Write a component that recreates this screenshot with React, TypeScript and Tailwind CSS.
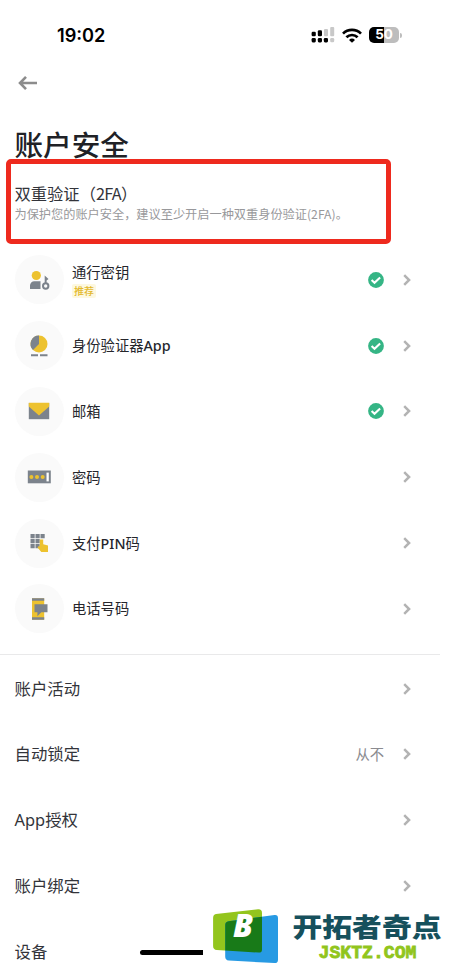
import { ReactNode } from "react";

interface MethodProps {
  label: string;
  icon: ReactNode;
  tag?: string;
  enabled?: boolean;
}

interface SettingProps {
  label: string;
  value?: string;
}

const PasskeyIcon = () => (
  <svg width="24" height="24" viewBox="0 0 24 24">
    <circle cx="9.3" cy="7.5" r="4.6" fill="#edc22f" />
    <path d="M3 21v-3.4a4.3 4.3 0 0 1 4.3-4.3h6.2V21z" fill="#7c838c" />
    <circle cx="18.7" cy="18" r="2.7" fill="none" stroke="#7c838c" strokeWidth="2" />
    <path d="M17.7 15.8V7.6l3.8 3.3-1.9 1.6v3.3z" fill="#7c838c" />
  </svg>
);

const AuthenticatorIcon = () => (
  <svg width="24" height="24" viewBox="0 0 24 24">
    <circle cx="12" cy="10" r="8.5" fill="#edc22f" />
    <path d="M12 10V1.5A8.5 8.5 0 0 0 6 16z" fill="#7c838c" />
    <path d="M4 21.2h7M13 21.2h7.5" stroke="#7c838c" strokeWidth="2" />
  </svg>
);

const MailIcon = () => (
  <svg width="24" height="24" viewBox="0 0 24 24">
    <path d="M1.8 4h20.4v16.2H1.8z" fill="#7c838c" />
    <path d="M1.8 3.8h20.4v3.6L12 16.4 1.8 7.4z" fill="#edc22f" />
  </svg>
);

const PasswordIcon = () => (
  <svg width="24" height="24" viewBox="0 0 24 24">
    <path d="M.8 5.5h23v12.8H.8z" fill="#7c838c" />
    <circle cx="4.4" cy="12" r="2" fill="#edc22f" />
    <circle cx="10" cy="12" r="2" fill="#edc22f" />
    <circle cx="15.7" cy="12" r="2" fill="#edc22f" />
    <path d="M19.5 7.6h2.3v8.8h-2.3z" fill="#fff" />
  </svg>
);

const PinIcon = () => (
  <svg width="24" height="24" viewBox="0 0 24 24">
    <path
      d="M3.5 3.1h4.2v4.1H3.5zM8.5 3.1h4.2v4.1H8.5zM13.5 3.1h4.2v4.1h-4.2zM3.5 8.1h4.2v4.1H3.5zM8.5 8.1h4.2v4.1H8.5zM3.5 13.1h4.2v4.1H3.5zM8.5 13.1h4.2v4.1H8.5z"
      fill="#7c838c"
    />
    <path d="M12.8 8.4h3.4v4.8l4.8 1.3v6.4h-6.7l-3.8-4.3 1.3-1.5 1 .5z" fill="#edc22f" />
  </svg>
);

const PhoneIcon = () => (
  <svg width="24" height="24" viewBox="0 0 24 24">
    <path d="M5 1.3h12.2v21.4H5z" fill="#edc22f" />
    <path d="M5 1.3h12.2v2.4H5zM5 20.3h12.2v2.4H5z" fill="#7c838c" />
    <path d="M7.5 7.2h13v8h-6.2l-3.9 4v-4H7.5z" fill="#7c838c" />
  </svg>
);

const CheckBadge = () => (
  <svg width="16" height="16" viewBox="0 0 16 16">
    <circle cx="8" cy="8" r="7.9" fill="#35b585" />
    <path d="M3.6 8l2.9 2.8 5.6-5.4" fill="none" stroke="#fff" strokeWidth="2.1" />
  </svg>
);

const Chevron = () => (
  <svg width="8" height="12" viewBox="0 0 8 12">
    <path d="M1.2 1.2L6.1 6l-4.9 4.8" fill="none" stroke="#b3b3b3" strokeWidth="2.5" />
  </svg>
);

const methods: MethodProps[] = [
  { label: "通行密钥", icon: <PasskeyIcon />, tag: "推荐", enabled: true },
  { label: "身份验证器App", icon: <AuthenticatorIcon />, enabled: true },
  { label: "邮箱", icon: <MailIcon />, enabled: true },
  { label: "密码", icon: <PasswordIcon /> },
  { label: "支付PIN码", icon: <PinIcon /> },
  { label: "电话号码", icon: <PhoneIcon /> },
];

const settings: SettingProps[] = [
  { label: "账户活动" },
  { label: "自动锁定", value: "从不" },
  { label: "App授权" },
  { label: "账户绑定" },
  { label: "设备" },
];

const StatusBar = () => (
  <div className="flex h-[70px] items-center justify-between pl-[57px] pr-[38px]">
    <span className="font-['Inter'] text-[18.2px] font-semibold leading-none text-black">
      19:02
    </span>
    <div className="flex items-center">
      <svg width="24" height="16" viewBox="0 0 24 16">
        <g fill="#000">
          <rect x=".6" y="4.8" width="4.2" height="4.4" rx="1.3" />
          <rect x="6.8" y="3.3" width="4.2" height="5.9" rx="1.3" />
          <rect x=".6" y="11" width="4.2" height="4.4" rx="1.3" />
          <rect x="6.8" y="11" width="4.2" height="4.4" rx="1.3" />
          <rect x="12.8" y="11" width="4.2" height="4.4" rx="1.3" />
        </g>
        <g fill="#c8c8c8">
          <rect x="13" y="2" width="4" height="7.2" rx="1" />
          <rect x="19.2" y="0" width="4" height="9.2" rx="1" />
          <rect x="19.2" y="11" width="4" height="4.2" rx="1.3" />
        </g>
      </svg>
      <svg className="ml-[7px]" width="20" height="15" viewBox="0 0 20 15">
        <g fill="none" stroke="#000" strokeWidth="2.7">
          <path d="M1 5.6a12.8 12.8 0 0 1 18 0" />
          <path d="M4.4 9.3a8 8 0 0 1 11.2 0" />
        </g>
        <path d="M7 11.9a4.3 4.3 0 0 1 6 0L10 14.7z" fill="#000" />
      </svg>
      <div className="ml-[7px] flex h-[16px] w-[30px] items-center justify-center rounded-[5px] bg-[linear-gradient(90deg,#000_50%,#bdbdbd_50%)] font-['Inter'] text-[13.5px] font-bold leading-none text-white">
        50
      </div>
      <div className="ml-px h-[5px] w-[2px] rounded-r-full bg-[#bdbdbd]" />
    </div>
  </div>
);

const MethodRow = ({ label, icon, tag, enabled }: MethodProps) => (
  <div className="flex h-[65.8px] items-center pl-[14.5px] pr-[29px]">
    <div className="flex size-[49px] shrink-0 items-center justify-center rounded-full bg-[#fafafa]">
      {icon}
    </div>
    <div className="ml-[8.5px] flex flex-1 flex-col items-start pt-px">
      <span className="text-[14.3px] leading-5 text-[#25262c]">
        {label.split(/([A-Za-z]+)/).map((part, i) => (
          <span key={i} className={i % 2 ? "font-medium" : ""}>
            {part}
          </span>
        ))}
      </span>
      {tag && (
        <span className="mt-px rounded-xs bg-[#fdf8e0] px-[2px] text-[10px] font-medium leading-[14px] text-[#e3b92e]">
          {tag}
        </span>
      )}
    </div>
    {enabled && <CheckBadge />}
    <div className="ml-[19px]">
      <Chevron />
    </div>
  </div>
);

const SettingRow = ({ label, value }: SettingProps) => (
  <div className="flex h-[65.8px] items-center pl-[14.5px] pr-[29px]">
    <span className="flex-1 text-[16.4px] leading-6 text-[#33343a]">{label}</span>
    {value && <span className="text-[14.3px] text-[#8b8b90]">{value}</span>}
    <div className="ml-[19px]">{label !== "设备" && <Chevron />}</div>
  </div>
);

const Watermark = () => (
  <div className="absolute bottom-0 right-0 h-[66px] w-[250px] bg-white">
    <svg width="250" height="66" viewBox="203 900 250 66">
      <path
        d="M216 914l42-4.8q4-.3 4 3.7v36.5q0 3.2-3.2 3.2l-42-2.6q-3.7-.3-3.7-4v-28q0-3.6 2.9-4z"
        fill="#93c51d"
      />
      <path
        d="M228.5 921.2l46-6.2q3.5-.4 3.5 3.2v41.5q0 3.6-3.6 3.4l-45.6-2.6q-3.6-.3-3.6-4v-31.8q0-3 3.3-3.5z"
        fill="#279ae3"
      />
      <path
        d="M228.5 921.2l33.5-4.5v32.7q0 3.2-3.2 3.2l-33.6-2v-25.9q0-3 3.3-3.5z"
        fill="#187a18"
      />
      <text
        x="233"
        y="936.5"
        textLength="20"
        lengthAdjust="spacingAndGlyphs"
        fill="#fff"
        className="font-['Open_Sans'] text-[31px] font-extrabold italic"
      >
        B
      </text>
      <text
        transform="translate(292.5 937) scale(1 .88)"
        textLength="149"
        lengthAdjust="spacingAndGlyphs"
        fill="#16505c"
        className="font-['Noto_Sans_CJK_SC'] text-[30px] font-black"
      >
        开拓者奇点
      </text>
      <text
        x="318.5"
        y="957.5"
        textLength="98"
        lengthAdjust="spacingAndGlyphs"
        fill="#91c51c"
        stroke="#91c51c"
        strokeWidth=".8"
        className="font-['Liberation_Mono'] text-[18.5px] font-bold"
      >
        JSKTZ.COM
      </text>
    </svg>
  </div>
);

const App = () => {
  return (
    <div className="relative h-[966px] w-[453px] overflow-hidden bg-white font-['Noto_Sans','Noto_Sans_CJK_SC',sans-serif]">
      <div className="w-[440px]">
        <StatusBar />

        <div className="flex h-[25px] items-center pl-[18px]">
          <svg width="20" height="16" viewBox="0 0 20 16">
            <path
              d="M8 1.8L2 8l6 6.2M2 8h17"
              fill="none"
              stroke="#8c8c8c"
              strokeWidth="2.6"
            />
          </svg>
        </div>

        <h1 className="flex h-[64px] items-end pl-[14.5px] text-[28.6px] font-medium leading-[29px] text-[#202126]">
          账户安全
        </h1>

        <div className="ml-[6px] h-[85px] w-[385px] rounded-[5px] border-[5px] border-[#ee2a1e] pl-[3.5px] pt-[18px] font-['Noto_Sans_CJK_SC',sans-serif]">
          <h2 className="text-[16.3px] leading-[22px] text-[#33343a]">
            双重验证（<span className="tracking-[-0.7px]">2FA</span>）
          </h2>
          <p className="whitespace-nowrap pt-px text-[12.2px] leading-[18px] text-[#98989b]">
            为保护您的账户安全，建议至少开启一种双重身份验证(2FA)。
          </p>
        </div>

        <div className="mt-[3px]">
          {methods.map((m) => (
            <MethodRow key={m.label} {...m} />
          ))}
        </div>

        <div className="mb-[1px] mt-[12px] h-px bg-[#e9e9ea]" />

        {settings.map((s) => (
          <SettingRow key={s.label} {...s} />
        ))}
      </div>

      {/* home indicator, runs under the watermark */}
      <div className="absolute left-[140px] top-[949.5px] h-[5px] w-[134px] rounded-full bg-black" />
      <Watermark />
    </div>
  );
};

export default App;
